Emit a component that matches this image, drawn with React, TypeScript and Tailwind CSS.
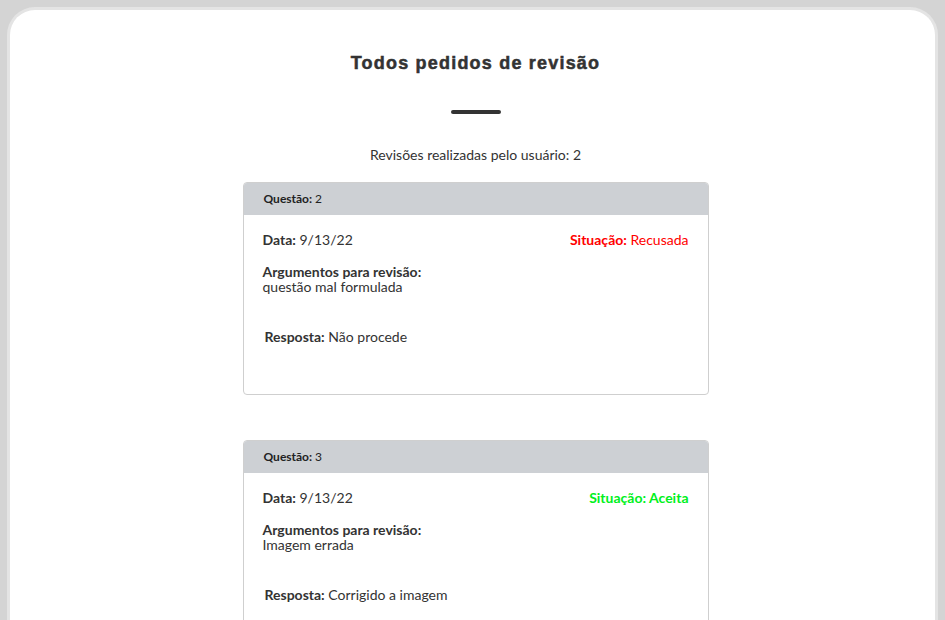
import React from "react";

type Item = {
  q: string;
  data: string;
  status: "Recusada" | "Aceita";
  arg: string;
  resp: string;
};

const items: Item[] = [
  { q: "2", data: "9/13/22", status: "Recusada", arg: "questão mal formulada", resp: "Não procede" },
  { q: "3", data: "9/13/22", status: "Aceita", arg: "Imagem errada", resp: "Corrigido a imagem" },
];

function Card({ it }: { it: Item }) {
  return (
    <div className="w-[466px] shrink-0 rounded-[4px] border border-[#cfcfcf] bg-white overflow-hidden">
      <div className="h-[32px] bg-[#cdd0d4] flex items-center pl-[20px] text-[12px] text-[#222]">
        <span className="font-bold">Questão:</span>
        <span className="ml-[3px]">{it.q}</span>
      </div>
      <div className="px-[19px] pt-[15px] pb-[47px] text-[14px] text-[#333]">
        <div className="flex justify-between leading-[20px]">
          <div>
            <span className="font-bold">Data:</span> {it.data}
          </div>
          {it.status === "Recusada" ? (
            <div className="text-[#ff0000]">
              <span className="font-bold">Situação:</span> Recusada
            </div>
          ) : (
            <div className="text-[#00f020] font-bold">Situação: Aceita</div>
          )}
        </div>
        <div className="mt-[14px] leading-[15px] font-bold">Argumentos para revisão:</div>
        <div className="leading-[15px]">{it.arg}</div>
        <div className="mt-[33px] ml-[2px] leading-[20px]">
          <span className="font-bold">Resposta:</span> {it.resp}
        </div>
      </div>
    </div>
  );
}

export default function App() {
  return (
    <div className="h-[620px] overflow-hidden bg-[#d4d4d4] pt-[7px] px-[7px]" style={{ fontFamily: "Lato, 'Noto Sans', sans-serif" }}>
      <div className="min-h-[640px] rounded-t-[28px] border-[3px] border-b-0 border-[#e4e4e4] bg-white flex flex-col items-center pl-[6px]">
        <h1
          className="shrink-0 mt-[41px] text-[18px] font-bold text-[#333] tracking-[1.2px] leading-[24px] [-webkit-text-stroke:0.5px_#333]"
          style={{ fontFamily: "'Liberation Sans', Arial, sans-serif" }}
        >
          Todos pedidos de revisão
        </h1>
        <div className="shrink-0 mt-[35px] w-[50px] h-[4px] rounded-[2px] bg-[#333]" />
        <div className="shrink-0 mt-[31px] text-[14px] text-[#333] leading-[20px]">Revisões realizadas pelo usuário: 2</div>
        <div className="shrink-0 mt-[17px] flex flex-col gap-[45px]">
          {items.map((it) => (
            <Card key={it.q} it={it} />
          ))}
        </div>
      </div>
    </div>
  );
}
